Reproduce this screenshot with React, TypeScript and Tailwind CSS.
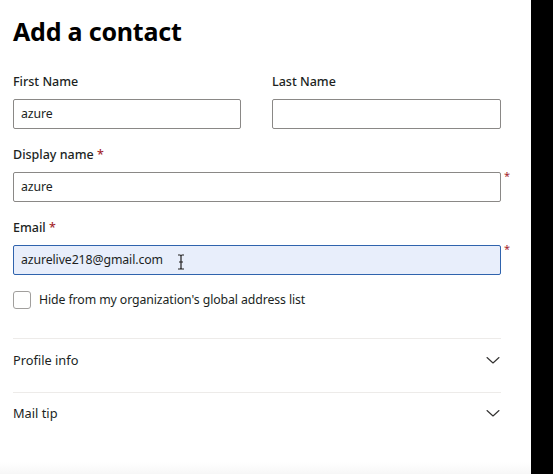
import React from 'react';

const font = { fontFamily: '"Noto Sans", "Open Sans", Arial, sans-serif' };

const Chevron: React.FC = () => (
  <svg width="16" height="10" viewBox="0 0 16 10" fill="none">
    <path d="M2 2.5 L8 8 L14 2.5" stroke="#323130" strokeWidth="1.1" strokeLinecap="round" strokeLinejoin="round" />
  </svg>
);

const Field: React.FC<{ label: string; required?: boolean; value?: string; active?: boolean; children?: React.ReactNode }> = ({ label, required, value, active, children }) => (
  <div>
    <div className="h-5 leading-5 text-[12.5px] font-medium text-[#201f1e] mb-[7px]">
      {label}
      {required ? <span className="text-[#a4262c]"> *</span> : null}
    </div>
    <div className="relative">
      <div
        className={`h-[30px] rounded-[2px] border flex items-center px-[7px] text-[12.3px] tracking-[-0.1px] text-[#201f1e] ${
          active ? 'border-[#2f63ad] bg-[#e8eefb]' : 'border-[#8a8886] bg-white'
        }`}
      >
        {value}
      </div>
      {children}
      {required ? <span className="absolute -right-[9px] -top-[2px] text-[11px] leading-3 text-[#a4262c]">*</span> : null}
    </div>
  </div>
);

export default function App() {
  return (
    <div className="flex h-[474px] w-[553px] overflow-hidden bg-black" style={font}>
      <div className="w-[531px] bg-white flex flex-col">
        <div className="pl-[13px] w-[501px]">
          <h1 className="mt-[14px] h-[34px] leading-[34px] text-[25px] font-bold text-black tracking-[-0.2px]">Add a contact</h1>

          <div className="mt-[24px] grid grid-cols-[228px_229px] gap-x-[31px]">
            <Field label="First Name" value="azure" />
            <Field label="Last Name" />
          </div>

          <div className="mt-4">
            <Field label="Display name" required value="azure" />
          </div>

          <div className="mt-4">
            <Field label="Email" required active value="azurelive218@gmail.com">
              <svg className="absolute left-[164px] top-[9px]" width="8" height="16" viewBox="0 0 8 16" fill="none">
                <path d="M1 1 H3 Q4 1 4 2.5 V13.5 Q4 15 3 15 H1 M7 1 H5 Q4 1 4 2.5 M4 13.5 Q4 15 5 15 H7 M2 8 H6" stroke="#201f1e" strokeWidth="1.2" />
              </svg>
            </Field>
          </div>

          <label className="mt-4 flex items-center gap-[8px] h-[18px]">
            <span className="w-[18px] h-[18px] rounded-[3px] border border-[#a19f9d] bg-white" />
            <span className="text-[12.3px] tracking-[-0.1px] text-[#201f1e]">Hide from my organization's global address list</span>
          </label>

          <div className="mt-[29px] border-t border-[#edebe9]">
            <div className="pt-[11px] flex items-start justify-between h-[53px]">
              <span className="h-5 leading-5 text-[12.8px] text-[#201f1e]">Profile info</span>
              <span className="mt-[5px]"><Chevron /></span>
            </div>
          </div>
          <div className="border-t border-[#edebe9]">
            <div className="pt-[10px] flex items-start justify-between">
              <span className="h-5 leading-5 text-[12.8px] text-[#201f1e]">Mail tip</span>
              <span className="mt-[5px]"><Chevron /></span>
            </div>
          </div>
        </div>
        <div className="flex-1" />
        <div className="h-[12px] bg-gradient-to-b from-white to-[#f7f7f7]" />
      </div>
      <div className="w-[22px] bg-black" />
    </div>
  );
}
